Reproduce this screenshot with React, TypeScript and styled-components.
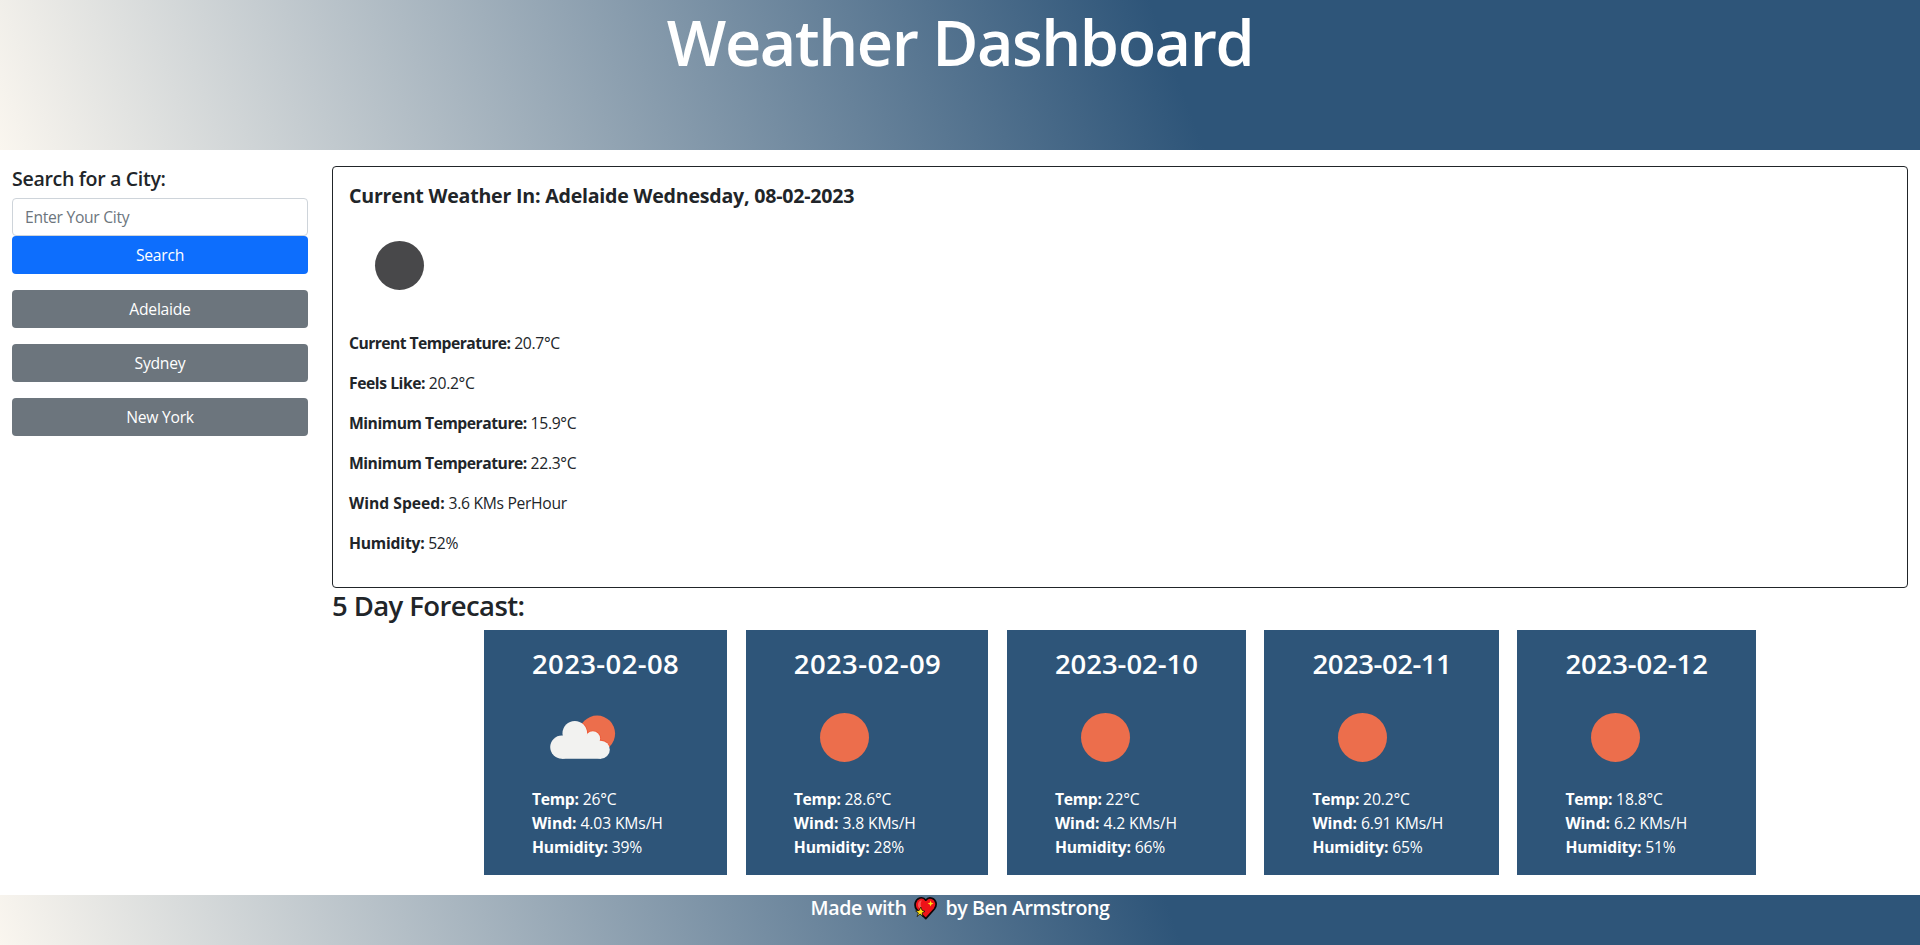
import React from "react";
import styled, { createGlobalStyle } from "styled-components";

const GlobalStyle = createGlobalStyle`
  *, *::before, *::after { box-sizing: border-box; }
  body {
    margin: 0;
    background: #fff;
    color: #212529;
    font-family: "Segoe UI", "Open Sans", "Noto Sans", sans-serif;
    font-size: 15.7px;
    line-height: 24px;
  }
`;

const blue = "#2e5579";
const fade = `linear-gradient(70deg, #faf6ef 0%, ${blue} 61%)`;

const Page = styled.div`
  display: flex;
  flex-direction: column;
  height: 945px;
  overflow: hidden;
`;

const Header = styled.header`
  height: 150px;
  background: ${fade};
  text-align: center;
  flex: none;
`;

const Title = styled.h1`
  margin: 0;
  color: #fff;
  font-size: 63px;
  font-weight: 600;
  line-height: 84px;
  letter-spacing: -1.46px;
`;

const Main = styled.main`
  display: grid;
  grid-template-columns: 320px 1fr;
  flex: 1;
  padding-top: 16px;
`;

const Sidebar = styled.aside`
  display: flex;
  flex-direction: column;
  align-items: stretch;
  padding: 0 12px;
`;

const SearchLabel = styled.label`
  padding-top: 1px;
  margin-bottom: 7px;
  font-size: 19.6px;
  font-weight: 550;
  letter-spacing: -0.34px;
`;

const CityInput = styled.input`
  height: 38px;
  padding: 6px 12px;
  border: 1px solid #ced4da;
  border-radius: 4px;
  font: inherit;
  letter-spacing: -0.3px;
  &::placeholder { color: #6c757d; opacity: 1; }
`;

const Button = styled.button<{ $primary?: boolean }>`
  height: 38px;
  margin-bottom: 16px;
  padding: 0 12px;
  border: 0;
  border-radius: 4px;
  background: ${(p) => (p.$primary ? "#0d6efd" : "#6c757d")};
  color: #fff;
  font: inherit;
  letter-spacing: -0.25px;
`;

const Content = styled.section`
  padding: 0 12px;
`;

const CurrentCard = styled.article`
  height: 422px;
  padding: 16px;
  border: 1px solid #212529;
  border-radius: 4px;
`;

const CurrentHeading = styled.h2`
  margin: 0 0 7px;
  padding-top: 1px;
  font-size: 19.6px;
  font-weight: 700;
  line-height: 24px;
  letter-spacing: -0.22px;
`;

const Icon = styled.svg`
  display: block;
  width: 100px;
  height: 100px;
`;

const CurrentIcon = styled(Icon)`
  margin-bottom: 16px;
`;

const Reading = styled.p`
  margin: 0 0 16px;
  font-weight: 400;
  letter-spacing: -0.32px;
`;

const Name = styled.strong<{ $tracking: number }>`
  font-weight: 700;
  letter-spacing: ${(p) => p.$tracking}px;
`;

const ForecastHeading = styled.h3`
  margin: 0 0 7px;
  padding-top: 1px;
  font-size: 27.5px;
  font-weight: 550;
  line-height: 33.6px;
  letter-spacing: -0.6px;
`;

const ForecastRow = styled.div`
  display: flex;
  justify-content: center;
  gap: 18.8px;
`;

const DayCard = styled.article<{ $width: number }>`
  width: ${(p) => p.$width}px;
  height: 245px;
  padding: 16px 0 0 48px;
  background: ${blue};
  color: #fff;
`;

const DayDate = styled.h3<{ $tracking: number }>`
  margin: 0 0 7px;
  padding-top: 1px;
  font-size: 27.5px;
  font-weight: 570;
  line-height: 33.6px;
  letter-spacing: ${(p) => p.$tracking}px;
  white-space: nowrap;
`;

const DayReading = styled.div`
  font-weight: 400;
  letter-spacing: -0.15px;
`;

const Footer = styled.footer`
  display: flex;
  justify-content: center;
  height: 50px;
  padding-top: 1px;
  flex: none;
  background: ${fade};
  color: #fff;
  font-size: 19.6px;
  font-weight: 600;
  letter-spacing: -0.42px;
`;

const Heart = styled.svg`
  width: 23px;
  height: 24px;
  margin: -0.5px 8.5px 0 7.5px;
`;

const readings = [
  { name: "Current Temperature:", value: "20.7°C", tracking: -0.56 },
  { name: "Feels Like:", value: "20.2°C", tracking: -0.44 },
  { name: "Minimum Temperature:", value: "15.9°C", tracking: -0.48 },
  { name: "Minimum Temperature:", value: "22.3°C", tracking: -0.48 },
  { name: "Wind Speed:", value: "3.6 KMs PerHour", tracking: 0 },
  { name: "Humidity:", value: "52%", tracking: -0.22 },
];

const days = [
  { date: "2023-02-08", temp: "26°C", wind: "4.03 KMs/H", humidity: "39%", width: 243.1, tracking: 0.38, cloudy: true },
  { date: "2023-02-09", temp: "28.6°C", wind: "3.8 KMs/H", humidity: "28%", width: 242.3, tracking: 0.38 },
  { date: "2023-02-10", temp: "22°C", wind: "4.2 KMs/H", humidity: "66%", width: 238.7, tracking: -0.05 },
  { date: "2023-02-11", temp: "20.2°C", wind: "6.91 KMs/H", humidity: "65%", width: 234.2, tracking: -0.45 },
  { date: "2023-02-12", temp: "18.8°C", wind: "6.2 KMs/H", humidity: "51%", width: 238.7, tracking: -0.1 },
];

const CloudShape = () => (
  <>
    <circle cx="29.7" cy="59.4" r="11.6" />
    <circle cx="42.7" cy="45.6" r="12.3" />
    <circle cx="60.7" cy="51" r="7.4" />
    <circle cx="68.7" cy="62" r="9" />
    <path d="M29.7 56 L36 52 L42 50 H66 V58 H69 V71 H29.7Z" />
  </>
);

const CloudySun = () => (
  <Icon viewBox="-0.1 -0.7 100 100">
    <circle cx="65" cy="45.9" r="18" fill="#ec6e4c" />
    <clipPath id="sunDisc">
      <circle cx="65" cy="45.9" r="18" />
    </clipPath>
    <g fill="#ef5936" stroke="#ef5936" strokeWidth="1.8" clipPath="url(#sunDisc)">
      <CloudShape />
    </g>
    <g fill="#f2f2f0">
      <CloudShape />
    </g>
  </Icon>
);

const Disc = () => <circle cx="50.5" cy="50.4" r="24.5" />;

const App = () => (
  <>
    <GlobalStyle />
    <Page>
      <Header>
        <Title>Weather Dashboard</Title>
      </Header>
      <Main>
        <Sidebar>
          <SearchLabel htmlFor="city">Search for a City:</SearchLabel>
          <CityInput id="city" placeholder="Enter Your City" />
          <Button $primary>Search</Button>
          <Button>Adelaide</Button>
          <Button>Sydney</Button>
          <Button>New York</Button>
        </Sidebar>
        <Content>
          <CurrentCard>
            <CurrentHeading>Current Weather In: Adelaide Wednesday, 08-02-2023</CurrentHeading>
            <CurrentIcon viewBox="0 0 100 100" fill="#48484a">
              <Disc />
            </CurrentIcon>
            {readings.map((r, i) => (
              <Reading key={i}>
                <Name $tracking={r.tracking}>{r.name}</Name> {r.value}
              </Reading>
            ))}
          </CurrentCard>
          <ForecastHeading>5 Day Forecast:</ForecastHeading>
          <ForecastRow>
            {days.map((d) => (
              <DayCard key={d.date} $width={d.width}>
                <DayDate $tracking={d.tracking}>{d.date}</DayDate>
                {d.cloudy ? (
                  <CloudySun />
                ) : (
                  <Icon viewBox="0 0 100 100" fill="#ec6e4c">
                    <Disc />
                  </Icon>
                )}
                <DayReading><Name $tracking={-0.28}>Temp:</Name> {d.temp}</DayReading>
                <DayReading><Name $tracking={0}>Wind:</Name> {d.wind}</DayReading>
                <DayReading><Name $tracking={-0.18}>Humidity:</Name> {d.humidity}</DayReading>
              </DayCard>
            ))}
          </ForecastRow>
        </Content>
      </Main>
      <Footer>
        <span>Made with</span>
        <Heart viewBox="0 0 23 24">
          <path
            d="M11.8 22.6 L2.6 13.4 C-0.2 9.6 1 3.4 5.8 2 C8.4 1.3 10.6 2.4 11.8 4.2 C13.2 2.2 15.6 1.3 18 2.2 C22.4 3.8 23.4 9 20.4 13 Z"
            fill="#ee1218"
            stroke="#0c0608"
            strokeWidth="1.7"
            strokeLinejoin="round"
          />
          <path d="M4 9 C4 6 5.6 4.4 8 4.6 C6.6 6 6.4 8.6 7.4 11.4 L5.8 12.6 C4.6 11.6 4 10.4 4 9Z" fill="#fb5454" />
          <path d="M16.6 4.6 L17.4 6.8 L19.6 7.6 L17.4 8.4 L16.6 10.6 L15.8 8.4 L13.6 7.6 L15.8 6.8Z" fill="#ffe112" />
          <path
            d="M6.8 11 L8 14.2 L11 15.4 L8.2 16.8 L8.6 20.6 L6.2 18 L3 20.6 L4.4 17 L1.6 15 L5.2 14.4Z"
            fill="#ffe112"
            stroke="#0c0608"
            strokeWidth="0.7"
          />
        </Heart>
        <span>by Ben Armstrong</span>
      </Footer>
    </Page>
  </>
);

export default App;
